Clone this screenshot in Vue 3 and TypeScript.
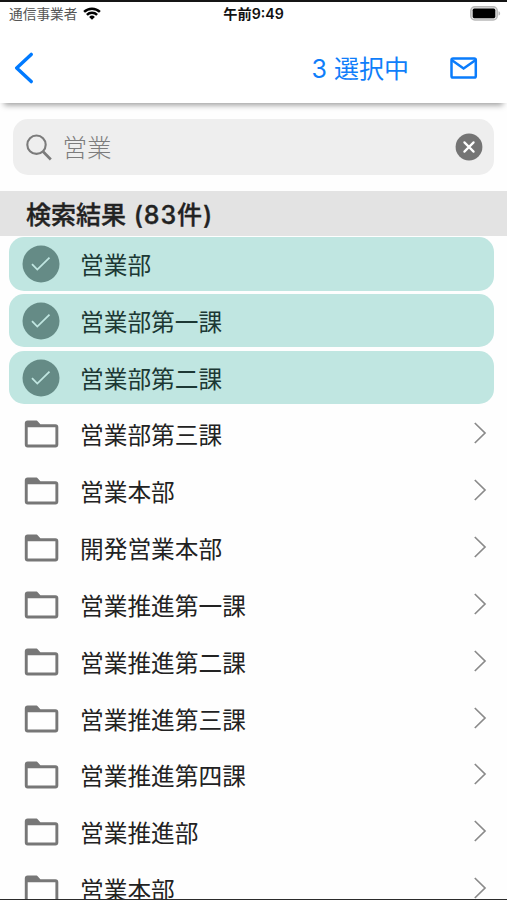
<script setup lang="ts">
import { ref, computed } from 'vue'

interface Department {
  id: number
  name: string
  selected: boolean
}

const keyword = ref('営業')
const total = 83

const names = [
  '営業部',
  '営業部第一課',
  '営業部第二課',
  '営業部第三課',
  '営業本部',
  '開発営業本部',
  '営業推進第一課',
  '営業推進第二課',
  '営業推進第三課',
  '営業推進第四課',
  '営業推進部',
  '営業本部',
]

const departments = ref<Department[]>(
  names.map((name, id) => ({ id, name, selected: id < 3 })),
)

const selectedCount = computed(() => departments.value.filter((d) => d.selected).length)

function toggle(item: Department) {
  item.selected = !item.selected
}
</script>

<template>
  <div class="screen">
    <header class="header">
      <div class="status">
        <div class="carrier">
          <span>通信事業者</span>
          <svg class="wifi" viewBox="0 0 18 13">
            <path d="M1.1 4.9a11.4 11.4 0 0 1 15.8 0" />
            <path d="M3.9 7.8a7.3 7.3 0 0 1 10.2 0" />
            <path class="dot" d="M9 12.8 6.1 9.9a4.1 4.1 0 0 1 5.8 0z" />
          </svg>
        </div>
        <div class="clock">午前9:49</div>
        <div class="power">
          <svg class="battery" viewBox="0 0 31 15">
            <rect x="0.8" y="0.8" width="26.4" height="13.2" rx="4" fill="#e4e4e4" stroke="#b9b9b9" stroke-width="1.5" />
            <rect x="2.7" y="2.6" width="22.6" height="9.6" rx="1.6" fill="#000" />
            <path d="M28.5 5.2c2.2.7 2.2 3.7 0 4.4z" fill="#b9b9b9" />
          </svg>
        </div>
      </div>
      <nav class="nav">
        <svg class="back" viewBox="0 0 20 32">
          <path d="M17.2 2.4 2.7 16l14.5 13.6" />
        </svg>
        <span class="count">{{ selectedCount }} 選択中</span>
        <svg class="mail" viewBox="0 0 28 22">
          <rect x="1.5" y="1.5" width="24.3" height="19" rx="1.6" />
          <path d="m2 3.2 11.6 8.3 11.7-8.3" />
        </svg>
      </nav>
    </header>

    <div class="search">
      <svg class="lens" viewBox="0 0 26 27">
        <circle cx="10.5" cy="10.7" r="9.2" />
        <path d="m17 17.5 7.8 8" />
      </svg>
      <span class="keyword">{{ keyword }}</span>
      <svg class="clear" viewBox="0 0 28 28">
        <circle cx="14" cy="14" r="13.4" fill="#747474" />
        <path d="m9.4 9.4 9.2 9.2M18.6 9.4l-9.2 9.2" stroke="#fff" stroke-width="2.2" stroke-linecap="round" />
      </svg>
    </div>

    <h2 class="summary">検索結果 <span class="total">({{ total }}件)</span></h2>

    <ul class="list">
      <li
        v-for="item in departments"
        :key="item.id"
        class="row"
        :class="{ selected: item.selected }"
        @click="toggle(item)"
      >
        <svg v-if="item.selected" class="icon" viewBox="0 0 38 38">
          <circle cx="19" cy="19" r="18.5" fill="#658b86" />
          <path d="m10 19.2 5.3 5.4 12.2-11.9" fill="none" stroke="#c0e6e1" stroke-width="1.8" />
        </svg>
        <svg v-else class="icon" viewBox="0 0 38 38">
          <path
            fill="#777"
            fill-rule="evenodd"
            d="M5.7 5.6h8.2c1 0 1.6.4 2.2 1.1l2.3 2.5h15a2.9 2.9 0 0 1 2.9 2.9v17.5a2.9 2.9 0 0 1-2.9 2.9H5.7a2.9 2.9 0 0 1-2.9-2.9V8.5a2.9 2.9 0 0 1 2.9-2.9zM5.7 12.2v17.4h27.7V12.2z"
          />
        </svg>
        <span class="name">{{ item.name }}</span>
        <svg v-if="!item.selected" class="chevron" viewBox="0 0 14 24">
          <path d="m1.8 1 10.2 10-10.2 10" />
        </svg>
      </li>
    </ul>
  </div>
</template>

<style>
body {
  margin: 0;
  background: #fff;
}
</style>

<style scoped>
.screen {
  box-sizing: border-box;
  height: 900px;
  overflow: hidden;
  display: flex;
  flex-direction: column;
  border-top: 2px solid #151515;
  border-bottom: 1px solid #2b2b2b;
  background: #fefefe;
  color: #222;
  font-family: Inter, "Noto Sans CJK JP", sans-serif;
}

svg {
  display: block;
  flex: none;
}

.header {
  flex: none;
  height: 101px;
  background: #fff;
  box-shadow: 0 6px 6px -4px rgba(0, 0, 0, 0.4);
}

.status {
  display: grid;
  grid-template-columns: 1fr auto 1fr;
  align-items: center;
  height: 23px;
  padding: 0 6px 0 9px;
}

.carrier {
  display: flex;
  align-items: center;
  gap: 6px;
  font-size: 13.7px;
  line-height: 20px;
  color: #555;
}

.wifi {
  width: 18px;
  height: 13px;
  fill: none;
  stroke: #000;
  stroke-width: 2.5;
}

.wifi .dot {
  fill: #000;
  stroke: none;
}

.clock {
  margin-right: 3px;
  font-size: 14.2px;
  font-weight: 600;
  line-height: 20px;
  color: #111;
}

.power {
  display: flex;
  justify-content: flex-end;
}

.battery {
  width: 31px;
  height: 15px;
}

.nav {
  display: flex;
  align-items: center;
  box-sizing: border-box;
  height: 78px;
  padding: 8px 29px 0 14px;
}

.back {
  width: 20px;
  height: 32px;
  fill: none;
  stroke: #007aff;
  stroke-width: 3.4;
  stroke-linecap: round;
  stroke-linejoin: round;
}

.count {
  margin-left: auto;
  padding-top: 1px;
  font-size: 25px;
  line-height: 36px;
  color: #0f7efa;
}

.mail {
  width: 28px;
  height: 22px;
  margin-left: 41px;
  fill: none;
  stroke: #0a7cfc;
  stroke-width: 2.5;
}

.search {
  flex: none;
  display: flex;
  align-items: center;
  box-sizing: border-box;
  height: 56px;
  margin: 16px 13px 16px;
  padding: 0 10.6px 0 13px;
  border-radius: 15px;
  background: #eee;
}

.lens {
  width: 26px;
  height: 27px;
  fill: none;
  stroke: #7b7b7b;
  stroke-width: 2.1;
}

.lens path {
  stroke-width: 2.7;
}

.keyword {
  flex: 1;
  margin-left: 10.5px;
  padding-top: 2px;
  font-size: 24.5px;
  font-weight: 300;
  line-height: 36px;
  color: #7c7c7c;
}

.clear {
  width: 28px;
  height: 28px;
  fill: none;
}

.summary {
  flex: none;
  box-sizing: border-box;
  height: 44.5px;
  margin: 0;
  padding-left: 26px;
  background: #e3e3e3;
  font-size: 25px;
  font-weight: 500;
  line-height: 49px;
  -webkit-text-stroke: 0.35px currentColor;
}

.total {
  margin-left: 1px;
  letter-spacing: 0.9px;
}

.list {
  flex: none;
  margin: 0;
  padding: 0;
  list-style: none;
}

.row {
  display: flex;
  align-items: center;
  box-sizing: border-box;
  height: 53.45px;
  margin: 1.7px 13px 3.4px 9px;
  padding: 0 7px 0 13px;
  border-radius: 15px;
}

.row + .row {
  margin-top: 0;
}

.row.selected {
  background: #c0e6e1;
  color: #1c3834;
}

.icon {
  width: 38px;
  height: 38px;
}

.name {
  flex: 1;
  margin-left: 20px;
  padding-top: 4px;
  font-size: 23.7px;
  line-height: 36px;
}

.chevron {
  width: 14px;
  height: 24px;
  fill: none;
  stroke: #8a8a8a;
  stroke-width: 1.7;
}
</style>
